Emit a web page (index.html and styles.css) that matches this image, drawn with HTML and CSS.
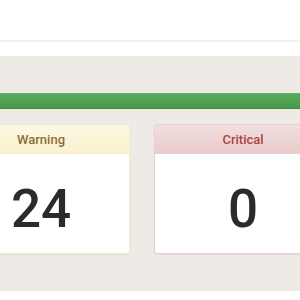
FILE: index.html
```html
<!DOCTYPE html>
<html lang="en">
<head>
    <meta charset="UTF-8">
    <title>Status</title>
    <link rel="stylesheet" href="styles.css">
</head>
<body>
    <div class="navbar"></div>
    <div class="subbar"></div>
    <div class="main">
        <div class="progress">
            <div class="progress-bar"></div>
        </div>
        <div class="cards">
            <div class="panel panel-warning">
                <div class="panel-heading">Warning</div>
                <div class="panel-body">24</div>
            </div>
            <div class="panel panel-danger">
                <div class="panel-heading">Critical</div>
                <div class="panel-body">0</div>
            </div>
        </div>
    </div>
    <div class="footer"></div>
</body>
</html>
```

FILE: styles.css
```css
body {
    margin: 0;
    overflow: hidden;
    background: #fff;
    font-family: Roboto, "Liberation Sans", Arial, sans-serif;
}

.navbar {
    height: 40px;
    background: #fff;
    border-bottom: 2px solid #f2f2f2;
}

.subbar {
    height: 14px;
}

.main {
    background: #eeeae6;
    padding: 37px 0 37px;
}

/* полоса прогресса */
.progress {
    height: 16px;
}
.progress-bar {
    height: 100%;
    background: linear-gradient(to bottom, #5aa95a, #48994a);
    border-top: 1px solid #69b269;
    border-bottom: 1px solid #3f8c41;
    box-sizing: border-box;
}

.cards {
    display: flex;
    gap: 24px;
    margin: 15px 0 0 -48px;
}

.panel {
    flex: 0 0 176px;
    background: #fff;
    border: 1px solid;
    border-radius: 3px;
    box-shadow: 0 1px 2px rgba(0, 0, 0, 0.06);
    overflow: hidden;
}

.panel-heading {
    height: 28px;
    line-height: 29px;
    text-align: center;
    font-size: 13px;
    font-weight: 500;
    border-bottom: 1px solid;
}

.panel-body {
    height: 99px;
    display: flex;
    align-items: center;
    justify-content: center;
    padding-top: 10px;
    box-sizing: border-box;
    font-size: 53px;
    font-weight: 500;
    color: #2b2b2b;
}

.panel-warning {
    border-color: #faebcc;
}
.panel-warning .panel-heading {
    color: #8a6d3b;
    background: linear-gradient(to bottom, #fcf8e3, #faf2cc);
    border-color: #faebcc;
}

.panel-danger {
    border-color: #ebccd1;
}
.panel-danger .panel-heading {
    color: #a94442;
    background: linear-gradient(to bottom, #f2dede, #ebcccc);
    border-color: #ebccd1;
}

.footer {
    height: 20px;
}
```
